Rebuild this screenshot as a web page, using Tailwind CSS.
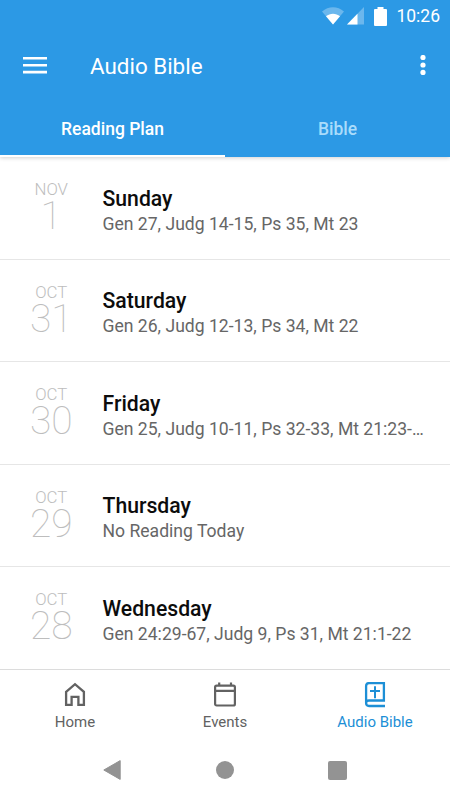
<!DOCTYPE html>
<html lang="en">
<head>
    <meta charset="UTF-8">
    <meta name="viewport" content="width=device-width, initial-scale=1.0">
    <title>Audio Bible</title>
    <script src="https://cdn.jsdelivr.net/npm/@tailwindcss/browser@4"></script>
</head>
<body class="bg-white font-['Roboto',sans-serif] overflow-hidden">
    <div class="w-[450px] h-[800px] flex flex-col overflow-hidden">
        <header class="h-[157px] shrink-0 bg-[#2c99e5] text-white flex flex-col shadow-[0_1px_4px_rgba(0,0,0,0.18)]">
            <!-- Status bar -->
            <div class="h-8 shrink-0 flex items-center justify-end pr-2.5">
                <svg class="w-[22px] h-[18px] mr-[3px]" viewBox="0 0 22 18">
                    <path d="M0 4.500C6.500-1.200 15.500-1.200 22 4.500L11 17.500z" fill="#fff" fill-opacity=".3"/>
                    <path d="M4 9.300C8 5.800 14 5.800 18 9.300L11 17.500z" fill="#fff"/>
                </svg>
                <svg class="w-[17px] h-[18px] mr-2.5" viewBox="0 0 17 18">
                    <path d="M17 0v17.500H0z" fill="#fff" fill-opacity=".3"/>
                    <path d="M10.500 6.700v10.800H0z" fill="#fff"/>
                </svg>
                <svg class="w-[13px] h-[19px] mr-[9px]" viewBox="0 0 13 19">
                    <path d="M3.500 0h6v2h2.500q1 0 1 1v15q0 1-1 1h-11Q0 19 0 18v-15Q0 2 1 2H3.500z" fill="#fff"/>
                </svg>
                <span id="clock" class="text-[17.500px] leading-5">10:26</span>
            </div>
            <!-- Toolbar -->
            <div class="h-[66px] shrink-0 flex items-center pl-[23px] pr-[24.500px]">
                <svg class="w-6 h-[17px] mr-[43px]" viewBox="0 0 24 17" fill="#fff">
                    <path d="M0 0h24v2.600H0zM0 6.900h24v2.600H0zM0 13.800h24v2.600H0z"/>
                </svg>
                <h1 class="text-[22.400px] leading-7 flex-1 mt-0.5">Audio Bible</h1>
                <svg class="w-[6px] h-5" viewBox="0 0 6 20" fill="#fff">
                    <circle cx="3" cy="2.500" r="2.600"/>
                    <circle cx="3" cy="10" r="2.600"/>
                    <circle cx="3" cy="17.400" r="2.600"/>
                </svg>
            </div>
            <nav class="flex-1 grid grid-cols-2 text-center text-[17.500px] font-medium leading-[63px]">
                <a class="border-b-2 border-white h-[59px]">Reading Plan</a>
                <a class="text-[#a9dcfb]">Bible</a>
            </nav>
        </header>

        <main class="shrink-0 h-[512px] flex flex-col">
            <div class="h-[102.500px] shrink-0 border-b border-[#e6e6e6] flex">
                <div class="w-[102.500px] shrink-0 pt-[26px] text-center text-[#bdbdbd]">
                    <p class="text-[16.800px] leading-3 font-light">NOV</p>
                    <p class="text-[39px] leading-[42px] font-thin">1</p>
                </div>
                <div class="flex-1 min-w-0 pt-7 pr-6">
                    <h2 class="text-[21.200px] leading-7 font-medium text-[#0c0c0c]">Sunday</h2>
                    <p class="text-[17.580px] leading-[22px] text-[#666] truncate">Gen 27, Judg 14-15, Ps 35, Mt 23</p>
                </div>
            </div>
            <div class="h-[102.500px] shrink-0 border-b border-[#e6e6e6] flex">
                <div class="w-[102.500px] shrink-0 pt-[26px] text-center text-[#bdbdbd]">
                    <p class="text-[16.800px] leading-3 font-light">OCT</p>
                    <p class="text-[39px] leading-[42px] font-thin">31</p>
                </div>
                <div class="flex-1 min-w-0 pt-[27px] pr-6">
                    <h2 class="text-[21.200px] leading-7 font-medium text-[#0c0c0c]">Saturday</h2>
                    <p class="text-[17.580px] leading-[22px] text-[#666] truncate">Gen 26, Judg 12-13, Ps 34, Mt 22</p>
                </div>
            </div>
            <div class="h-[102.500px] shrink-0 border-b border-[#e6e6e6] flex">
                <div class="w-[102.500px] shrink-0 pt-[26px] text-center text-[#bdbdbd]">
                    <p class="text-[16.800px] leading-3 font-light">OCT</p>
                    <p class="text-[39px] leading-[42px] font-thin">30</p>
                </div>
                <div class="flex-1 min-w-0 pt-7 pr-6">
                    <h2 class="text-[21.200px] leading-7 font-medium text-[#0c0c0c]">Friday</h2>
                    <p class="text-[17.580px] leading-[22px] text-[#666] truncate">Gen 25, Judg 10-11, Ps 32-33, Mt 21:23-…</p>
                </div>
            </div>
            <div class="h-[102.500px] shrink-0 border-b border-[#e6e6e6] flex">
                <div class="w-[102.500px] shrink-0 pt-[26px] text-center text-[#bdbdbd]">
                    <p class="text-[16.800px] leading-3 font-light">OCT</p>
                    <p class="text-[39px] leading-[42px] font-thin">29</p>
                </div>
                <div class="flex-1 min-w-0 pt-[27px] pr-6">
                    <h2 class="text-[21.200px] leading-7 font-medium text-[#0c0c0c]">Thursday</h2>
                    <p class="text-[17.580px] leading-[22px] text-[#666] truncate">No Reading Today</p>
                </div>
            </div>
            <div class="h-[102px] shrink-0 flex">
                <div class="w-[102.500px] shrink-0 pt-[26px] text-center text-[#bdbdbd]">
                    <p class="text-[16.800px] leading-3 font-light">OCT</p>
                    <p class="text-[39px] leading-[42px] font-thin">28</p>
                </div>
                <div class="flex-1 min-w-0 pt-7 pr-6">
                    <h2 class="text-[21.200px] leading-7 font-medium text-[#0c0c0c]">Wednesday</h2>
                    <p class="text-[17.580px] leading-[22px] text-[#666] truncate">Gen 24:29-67, Judg 9, Ps 31, Mt 21:1-22</p>
                </div>
            </div>
        </main>

        <!-- Bottom navigation -->
        <nav class="h-[71px] shrink-0 border-t border-[#dcdcdc] grid grid-cols-3 text-[15px] leading-5 text-[#626262]">
            <a class="flex flex-col items-center pt-3">
                <svg class="w-6 h-[26px] mb-[4px]" viewBox="0 0 24 26" fill="none" stroke="currentColor" stroke-width="2.300">
                    <path d="M3.100 9.800L12 2.200l8.900 7.600V22.800h-5.500v-8h-6.800v8H3.100z"/>
                </svg>
                Home
            </a>
            <a class="flex flex-col items-center pt-3">
                <svg class="w-6 h-[26px] mb-[4px]" viewBox="0 0 24 26" fill="none" stroke="currentColor" stroke-width="2.200">
                    <rect x="2.100" y="3.700" width="19.800" height="19.800" rx="1.500"/>
                    <path d="M2 8.800h20M6.200 .500v3M18 .500v3"/>
                </svg>
                Events
            </a>
            <a class="flex flex-col items-center pt-3 text-[#1d8fd6]">
                <svg class="w-6 h-[26px] mb-[4px]" viewBox="0 0 24 26" fill="none" stroke="currentColor" stroke-width="2.300">
                    <path d="M22 24H6q-2.900 0-2.900-3V4q0-2.900 2.900-2.900h14.900v17.400H6q-2.900 0-2.900 2.500"/>
                    <path d="M12 4.200v12M7 8.900h10" stroke-width="2"/>
                </svg>
                Audio Bible
            </a>
        </nav>

        <!-- System buttons -->
        <div class="h-[60px] shrink-0 flex items-center justify-center gap-[94px]">
            <svg class="w-[18px] h-5 mr-[1px]" viewBox="0 0 18 20">
                <path d="M17.200 .600v18.800L.800 10z" fill="#939393" stroke="#939393" stroke-linejoin="round"/>
            </svg>
            <div class="size-[18px] rounded-full bg-[#939393]"></div>
            <div class="size-[19px] rounded-[2px] bg-[#939393]"></div>
        </div>
    </div>
</body>
</html>
